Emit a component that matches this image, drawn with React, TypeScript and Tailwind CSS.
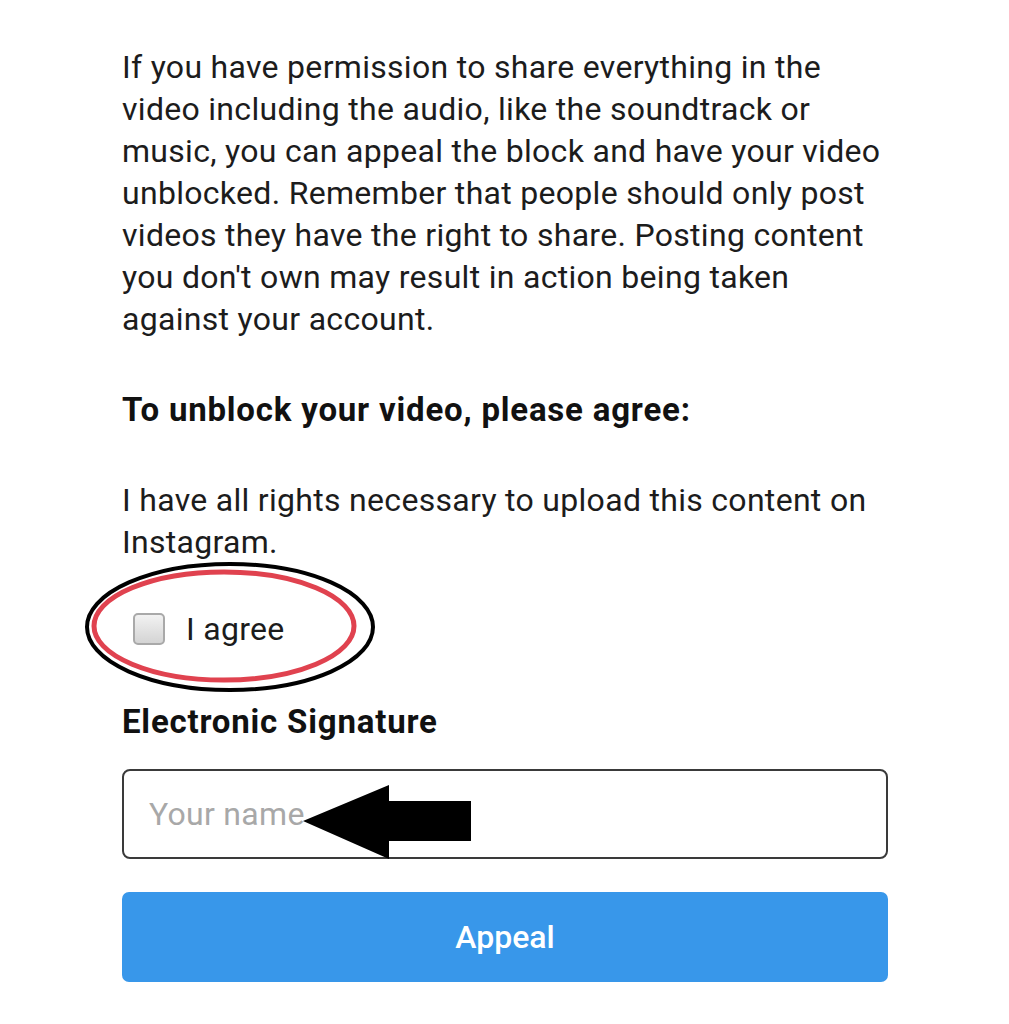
export default function App() {
  return (
    <div className="min-h-[1024px] w-[1009px] bg-white font-['Roboto',sans-serif] text-[#1c1c1c]">
      <div className="pl-[122px] pr-[100px] pt-[46px]">
        <p className="text-[32px] leading-[42px] tracking-[0.3px]">
          If you have permission to share everything in the
          <br />
          video including the audio, like the soundtrack or
          <br />
          music, you can appeal the block and have your video
          <br />
          unblocked. Remember that people should only post
          <br />
          videos they have the right to share. Posting content
          <br />
          you don't own may result in action being taken
          <br />
          against your account.
        </p>

        <h2 className="mt-[49px] text-[33px] font-bold leading-[42px] tracking-[0.8px] text-[#111]">
          To unblock your video, please agree:
        </h2>

        <p className="mt-[48px] text-[32px] leading-[42px] tracking-[0.3px]">
          I have all rights necessary to upload this content on
          <br />
          Instagram.
        </p>

        {/* checkbox row with the hand-drawn ellipses */}
        <div className="relative mt-[46px] flex h-[40px] items-center pl-[11px]">
          <svg
            className="pointer-events-none absolute left-[-38px] top-[-48px]"
            width="294"
            height="134"
            viewBox="0 0 294 134"
          >
            <ellipse cx="146" cy="66" rx="143" ry="63" fill="none" stroke="#000" strokeWidth="4" />
            <ellipse cx="140" cy="65" rx="130" ry="54" fill="none" stroke="#e0424f" strokeWidth="5" />
          </svg>
          <span className="block h-[32px] w-[32px] rounded-[5px] border-2 border-[#a9a9a9] bg-gradient-to-b from-[#f2f2f2] to-[#d4d4d4]" />
          <span className="ml-[21px] text-[32px] leading-[40px] tracking-[0.3px]">I agree</span>
        </div>

        <h3 className="mt-[53px] text-[33px] font-bold leading-[40px] tracking-[0.8px] text-[#111]">
          Electronic Signature
        </h3>

        <div className="relative mt-[27px] flex h-[90px] w-[766px] items-center rounded-[8px] border-2 border-[#3a3a3a] pl-[25px]">
          <span className="text-[32px] tracking-[0.3px] text-[#a8a8a8]">Your name</span>
          <svg
            className="pointer-events-none absolute left-[179px] top-[12px]"
            width="170"
            height="78"
            viewBox="0 0 170 78"
          >
            <path d="M0 38 L86 2 L86 18 L168 18 L168 58 L86 58 L86 76 Z" fill="#000" />
          </svg>
        </div>

        <button className="mt-[33px] flex h-[90px] w-[766px] items-center justify-center rounded-[7px] bg-[#3897ea] text-[32px] font-medium text-white">
          Appeal
        </button>
      </div>
    </div>
  );
}
